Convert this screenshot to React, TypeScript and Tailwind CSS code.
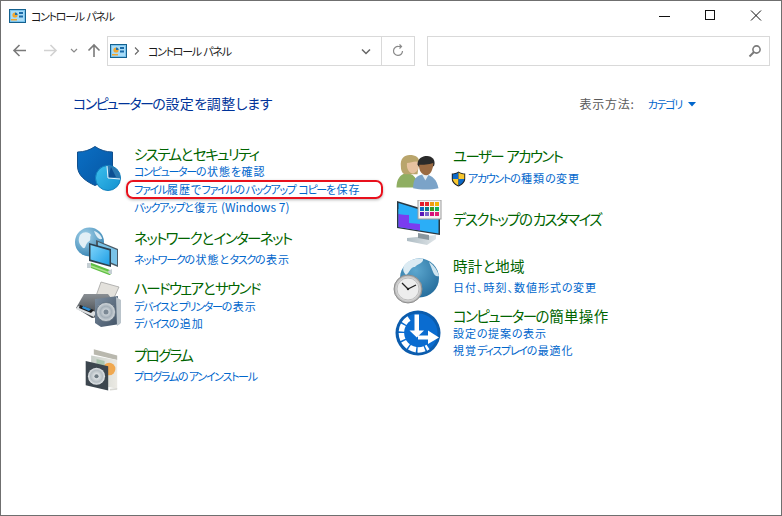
import React from "react";

const FONT = "[font-family:'Noto_Sans_CJK_JP','Noto_Sans',sans-serif] [font-feature-settings:'palt']";

function splitRuns(text: string) {
  return text.match(/[ぁ-ゟ]+|[゠-ヿー]+|[一-龯、]+|[^ぁ-ゟ゠-ヿー一-龯、]+/g) ?? [];
}

/* Text whose katakana is set tighter than its hiragana and kanji, as the narrow UI font of the picture does. */
function T({ children, big = false }: { children: string; big?: boolean }) {
  return (
    <>
      {splitRuns(children).map((run, i) => {
        const hira = /^[ぁ-ゟ]/.test(run);
        const kata = /^[゠-ヿー]/.test(run);
        const kanji = /^[一-龯、]/.test(run);
        const cls = big
          ? kata
            ? "tracking-[-1.6px]"
            : hira
              ? "tracking-[-0.2px]"
              : kanji
                ? "tracking-[0.3px]"
                : "tracking-[0px]"
          : kata
            ? "tracking-[-1.3px]"
            : hira
              ? "tracking-[0.4px]"
              : kanji
                ? "tracking-[1px]"
                : "text-[12px] tracking-[0px]";
        return (
          <span key={i} className={cls}>
            {run}
          </span>
        );
      })}
    </>
  );
}

function CpIcon() {
  return (
    <svg width="17" height="14" viewBox="0 0 17 14" className="shrink-0">
      <rect x="0.5" y="0.5" width="16" height="13" fill="#7cc4ee" stroke="#14618f" />
      <rect x="2" y="2" width="13" height="10" fill="#a9dcf7" />
      <circle cx="6" cy="6" r="2.6" fill="#f0a630" />
      <path d="M6 6V3.4A2.6 2.6 0 0 1 8.6 6Z" fill="#1a70b0" />
      <rect x="10" y="3" width="4" height="2" fill="#1b6aa8" />
      <rect x="10" y="6.5" width="4" height="2" fill="#1b6aa8" />
      <rect x="2" y="10" width="6" height="1.5" fill="#f0a630" />
    </svg>
  );
}

function ShieldIcon() {
  return (
    <svg width="48" height="48" viewBox="0 0 48 48">
      <defs>
        <linearGradient id="sh" x1="0" y1="0" x2="1" y2="1">
          <stop offset="0" stopColor="#0a6fc4" />
          <stop offset="1" stopColor="#0656a3" />
        </linearGradient>
        <linearGradient id="pie" x1="0" y1="0" x2="1" y2="1">
          <stop offset="0" stopColor="#3cc0ee" />
          <stop offset="1" stopColor="#1390cf" />
        </linearGradient>
      </defs>
      <path d="M21 0.5C16 4 10 6 3.5 6V20C3.5 29 11 35 21 39.5C31 35 38.5 29 38.5 20V6C32 6 26 4 21 0.5Z" fill="url(#sh)" stroke="#114f8c" />
      <circle cx="34" cy="32" r="12.5" fill="url(#pie)" stroke="#1180bd" />
      <path d="M34 32L33 19.6A12.5 12.5 0 0 1 46.3 33Z" fill="#2a78b0" />
      <path d="M34 32L37 21L42 31Z" fill="#0c4f92" />
      <path d="M34 32L46 33" stroke="#e8f7ff" strokeWidth="1" />
      <path d="M34 32L33 20" stroke="#e8f7ff" strokeWidth="1" />
    </svg>
  );
}

function NetworkIcon() {
  return (
    <svg width="48" height="48" viewBox="0 0 48 48">
      <defs>
        <radialGradient id="gl" cx="0.35" cy="0.3" r="0.8">
          <stop offset="0" stopColor="#a6d3ea" />
          <stop offset="1" stopColor="#2f7fb0" />
        </radialGradient>
        <linearGradient id="scr" x1="0" y1="0" x2="1" y2="1">
          <stop offset="0" stopColor="#7fd4fb" />
          <stop offset="1" stopColor="#1e9fe6" />
        </linearGradient>
      </defs>
      <circle cx="15.5" cy="15" r="14.5" fill="url(#gl)" />
      <path d="M6 8C10 4 15 5 17 8C15 11 18 13 14 15C11 18 12 22 9 21C6 18 3 14 6 8Z" fill="#e2eff6" />
      <path d="M20 4C24 5 28 9 28 12C24 13 22 9 20 4Z" fill="#dcecf5" />
      <path d="M22 13L44 22V40L22 31Z" fill="#4a5b66" />
      <path d="M24 15L43 23V38L24 30Z" fill="#7ac3e8" />
      <path d="M15 16L37 22V40L15 34Z" fill="#2d4150" />
      <path d="M16.5 18L35.5 23.5V38L16.5 32.5Z" fill="url(#scr)" />
      <path d="M16 38L37 46" stroke="#5fbf45" strokeWidth="5" />
      <path d="M17 39L36 46" stroke="#a8e28a" strokeWidth="1.5" />
      <rect x="13" y="36" width="4" height="5" fill="#c5cfd4" />
      <path d="M34 44L38 42V47L35 47Z" fill="#c5cfd4" />
    </svg>
  );
}

function PrinterIcon() {
  return (
    <svg width="48" height="50" viewBox="0 0 48 48">
      <defs>
        <linearGradient id="pr" x1="0" y1="0" x2="0" y2="1">
          <stop offset="0" stopColor="#8a8f94" />
          <stop offset="1" stopColor="#3d4247" />
        </linearGradient>
        <linearGradient id="spk" x1="0" y1="0" x2="1" y2="1">
          <stop offset="0" stopColor="#7d8ea0" />
          <stop offset="1" stopColor="#3f5063" />
        </linearGradient>
        <radialGradient id="cone">
          <stop offset="0" stopColor="#eef1f3" />
          <stop offset="0.6" stopColor="#a4afb8" />
          <stop offset="1" stopColor="#d8dde1" />
        </radialGradient>
      </defs>
      <path d="M27 2L45 7L39 20L22 16Z" fill="#e3e1dc" stroke="#9a9a98" strokeWidth="0.7" />
      <path d="M10 14H34L40 22V34L18 38L2 28Z" fill="url(#pr)" />
      <path d="M4 26L22 32L20 37L2 29Z" fill="#dcdfe1" />
      <path d="M6 25L20 30L17 33L5 28Z" fill="#1c1c1e" />
      <path d="M9 26L17 29L15 31L8 28Z" fill="#2f8fd6" />
      <path d="M21 19L44 16V20L46 44L27 47L21 43Z" fill="url(#spk)" />
      <path d="M42 17L47 20V43L43 46Z" fill="#b9c3ca" />
      <circle cx="32" cy="32" r="9.5" fill="url(#cone)" stroke="#556473" strokeWidth="0.7" />
      <circle cx="32" cy="32" r="2.5" fill="#7b8894" />
    </svg>
  );
}

function ProgramIcon() {
  return (
    <svg width="36" height="44" viewBox="0 0 40 48">
      <defs>
        <linearGradient id="bx" x1="0" y1="0" x2="1" y2="0">
          <stop offset="0" stopColor="#c8cfc9" />
          <stop offset="1" stopColor="#eceae4" />
        </linearGradient>
        <radialGradient id="cd">
          <stop offset="0" stopColor="#f4f6f7" />
          <stop offset="0.7" stopColor="#b5bdc2" />
          <stop offset="1" stopColor="#e6e9eb" />
        </radialGradient>
      </defs>
      <path d="M12 2L38 9V14L12 8Z" fill="#b9b8ae" />
      <path d="M9 9L38 14V46L9 40Z" fill="url(#bx)" />
      <circle cx="29" cy="24" r="7" fill="#f0a850" />
      <path d="M15 13L24 15V22L15 20Z" fill="#a9c4ad" />
      <path d="M3 15L28 21V48L3 42Z" fill="#3c464e" />
      <circle cx="15" cy="32" r="9.5" fill="url(#cd)" />
      <circle cx="15" cy="32" r="2.3" fill="#6e7a82" />
      <path d="M30 46L38 45V47L30 48Z" fill="#d9d9d4" />
    </svg>
  );
}

function UsersIcon() {
  return (
    <svg width="43" height="35" viewBox="0 0 48 40">
      <path d="M0 37C0 28 4 22 10 21C18 20 24 26 25 37Z" fill="#8fae62" />
      <path d="M5 13C4 4 9 0 15 0C22 0 26 3 26 8L24 22H9C6 20 5 17 5 13Z" fill="#b9a56c" />
      <path d="M12 9C16 9 22 6 25 8C26 13 25 20 19 21C15 21 11 16 12 9Z" fill="#e6c2a0" />
      <path d="M19 38C19 28 22 23 32 22C42 23 46 29 48 38C40 40 27 40 19 38Z" fill="#7ba3c8" />
      <path d="M29 22L33 29L37 22Z" fill="#e6eef5" />
      <path d="M24 11C24 4 29 1 35 1C41 1 45 6 43 12L41 14H26Z" fill="#2a2a2a" />
      <path d="M26 11C30 11 37 11 42 9C42 16 39 23 34 23C29 23 25 17 26 11Z" fill="#9a6a42" />
    </svg>
  );
}

function MonitorIcon() {
  const colors = ["#e21b2d", "#e8262a", "#f09a10", "#f5b400", "#0a6cc6", "#0a7d8c", "#3f9a22", "#10b060", "#5a18b8", "#7a62c8", "#d8107a", "#e01f72"];
  return (
    <svg width="48" height="46" viewBox="0 0 48 46">
      <defs>
        <linearGradient id="st" x1="0" y1="0" x2="1" y2="0">
          <stop offset="0" stopColor="#aebcc4" />
          <stop offset="1" stopColor="#dfe5e8" />
        </linearGradient>
      </defs>
      <path d="M1 1L44 14V35L1 28Z" fill="#2b3942" />
      <path d="M2.5 3L42.5 15.5V33.5L2.5 27Z" fill="#2baef7" />
      <path d="M2.5 14L13 15V23L24 24V30.5L2.5 27Z" fill="#7a3cf0" />
      <path d="M2.5 9L12 10V15L2.5 14Z" fill="#2baef7" />
      <path d="M11 38L40 35V39L31 45L11 41Z" fill="url(#st)" />
      <path d="M22 33L33 35V40L22 38Z" fill="#8a979e" />
      <rect x="22" y="0" width="23" height="19" fill="#f3f3f3" stroke="#9c9c9c" />
      {colors.map((c, i) => (
        <rect key={i} x={24 + (i % 4) * 5} y={2 + Math.floor(i / 4) * 5} width="4" height="4" fill={c} />
      ))}
    </svg>
  );
}

function ClockIcon() {
  return (
    <svg width="48" height="46" viewBox="0 0 48 46">
      <defs>
        <radialGradient id="g2" cx="0.4" cy="0.3" r="0.85">
          <stop offset="0" stopColor="#5ca7cf" />
          <stop offset="1" stopColor="#1d6494" />
        </radialGradient>
        <radialGradient id="cl">
          <stop offset="0" stopColor="#f5f5f5" />
          <stop offset="0.8" stopColor="#dcdcdc" />
          <stop offset="1" stopColor="#a7a7a7" />
        </radialGradient>
      </defs>
      <circle cx="26.5" cy="20" r="19.5" fill="url(#g2)" />
      <path d="M12 6C17 1 24 0 30 1C31 5 24 6 22 9C18 8 17 14 13 17C10 14 9 10 12 6Z" fill="#dcebf3" />
      <path d="M36 4C41 7 45 13 46 18C41 20 40 13 36 4Z" fill="#cfe4ef" />
      <circle cx="15" cy="31" r="14" fill="url(#cl)" stroke="#8f8f8f" />
      <circle cx="15" cy="31" r="11" fill="#ededed" stroke="#bdbdbd" />
      <path d="M15 31L23 27M15 31L9 25" stroke="#222" strokeWidth="1.3" />
      <circle cx="15" cy="31" r="1.2" fill="#222" />
    </svg>
  );
}

function AccessIcon() {
  return (
    <svg width="46" height="46" viewBox="0 0 46 46">
      <circle cx="23" cy="23" r="22.5" fill="#0b5cad" />
      <circle cx="23" cy="23" r="19.5" fill="#0a6cd0" />
      <path d="M14 8.5A17 17 0 0 0 33 37" fill="none" stroke="#fff" strokeWidth="5.5" strokeDasharray="7 1.5" />
      <path d="M19.5 4.5H24V20.5H29L21.8 27.5L14.5 20.5H19.5Z" fill="#fff" />
      <path d="M23 25.5H33V20.5L44 27.5L33 34V29.5H23Z" fill="#fff" />
    </svg>
  );
}

function UacShield() {
  return (
    <svg width="15" height="16" viewBox="0 0 15 16" className="shrink-0">
      <path d="M7.5 0.5C5.5 2 3 2.5 0.8 2.5V8C0.8 11.5 4 14 7.5 15.5C11 14 14.2 11.5 14.2 8V2.5C12 2.5 9.5 2 7.5 0.5Z" fill="#1c1c1c" />
      <path d="M7.5 1.5V8H1.7V3.3C3.5 3.2 6 2.7 7.5 1.5Z" fill="#0c69c8" />
      <path d="M7.5 1.5C9 2.7 11.5 3.2 13.3 3.3V8H7.5Z" fill="#f7c62e" />
      <path d="M1.7 8H7.5V14.5C5 13.3 2 11 1.7 8Z" fill="#f7c62e" />
      <path d="M7.5 8H13.3C13 11 10 13.3 7.5 14.5Z" fill="#0c69c8" />
    </svg>
  );
}

function A({ children, className = "" }: { children: string; className?: string }) {
  return (
    <div className={"h-[17px] leading-[17px] text-[11px] text-[#0066cc] whitespace-nowrap " + className}>
      <T>{children}</T>
    </div>
  );
}
function H({ children }: { children: string }) {
  return (
    <div className="h-[20px] leading-[20px] text-[14.5px] text-[#006400] whitespace-nowrap">
      <T big>{children}</T>
    </div>
  );
}

export default function App() {
  return (
    <div className={"w-[782px] h-[516px] bg-white border border-[#6f6f6f] overflow-hidden flex flex-col text-[#1a1a1a] " + FONT}>
      {/* title bar */}
      <div className="h-[30px] flex items-center shrink-0">
        <div className="ml-[8px] -mt-[1px]"><CpIcon /></div>
        <span className="ml-[5px] text-[11px] text-[#1a1a1a]"><T>コントロール パネル</T></span>
        <div className="ml-auto flex items-center">
          <svg width="46" height="30" viewBox="0 0 46 30"><path d="M17 15.5H28" stroke="#111" /></svg>
          <svg width="46" height="30" viewBox="0 0 46 30"><rect x="17.5" y="9.5" width="9" height="9" fill="none" stroke="#111" /></svg>
          <svg width="46" height="30" viewBox="0 0 46 30" className="mr-[1px]"><path d="M17 9.5L27 19.5M27 9.5L17 19.5" stroke="#111" /></svg>
        </div>
      </div>
      {/* nav */}
      <div className="h-[30px] mt-[5px] flex items-center shrink-0">
        <svg width="106" height="30" viewBox="0 0 106 30" className="shrink-0">
          <path d="M13 14.5H25M18.5 9L13 14.5L18.5 20" fill="none" stroke="#7a7a7a" strokeWidth="1.6" />
          <path d="M43 14.5H55M49.5 9L55 14.5L49.5 20" fill="none" stroke="#d2d2d2" strokeWidth="1.6" />
          <path d="M70 13L73 16L76 13" fill="none" stroke="#8a8a8a" strokeWidth="1.2" />
          <path d="M93 21V9M87.5 14.5L93 9L98.5 14.5" fill="none" stroke="#7a7a7a" strokeWidth="1.6" />
        </svg>
        <div className="w-[308px] h-[30px] border border-[#d9d9d9] flex items-center">
          <div className="ml-[2px]"><CpIcon /></div>
          <svg width="8" height="10" viewBox="0 0 8 10" className="ml-[6px]"><path d="M2 1.5L5.5 5L2 8.5" fill="none" stroke="#666" strokeWidth="1.1" /></svg>
          <span className="ml-[7px] text-[11px] text-[#1a1a1a]"><T>コントロール パネル</T></span>
          <svg width="10" height="7" viewBox="0 0 10 7" className="ml-auto mr-[10px]"><path d="M1 1.5L5 5.5L9 1.5" fill="none" stroke="#666" strokeWidth="1.5" /></svg>
          <div className="w-[33px] h-full border-l border-[#d9d9d9] flex items-center justify-center shrink-0">
            <svg width="14" height="14" viewBox="0 0 14 14"><path d="M11.5 7A4.5 4.5 0 1 1 7.5 2.5H10M8.5 0.5L10.5 2.5L8.5 4.5" fill="none" stroke="#8a8a8a" strokeWidth="1.2" /></svg>
          </div>
        </div>
        <div className="ml-[12px] w-[343px] h-[30px] border border-[#d9d9d9] flex items-center justify-end pr-[7px]">
          <svg width="14" height="14" viewBox="0 0 14 14"><circle cx="8.5" cy="5.5" r="3.6" fill="none" stroke="#7a7a7a" strokeWidth="1.6" /><path d="M6 8L1.5 12.5" stroke="#7a7a7a" strokeWidth="2" /></svg>
        </div>
      </div>
      {/* header */}
      <div className="flex items-center mt-[26px] h-[22px] shrink-0">
        <span className="ml-[72px] text-[14px] text-[#003399] whitespace-nowrap"><T big>コンピューターの設定を調整します</T></span>
        <span className="ml-auto text-[12px] text-[#5a5a5a] mt-[2px] tracking-[0.8px]">表示方法:</span>
        <span className="ml-[13px] text-[11px] text-[#0066cc] mt-[2px]"><T>カテゴリ</T></span>
        <svg width="8" height="5" viewBox="0 0 8 5" className="ml-[6px] mr-[85px] mt-[2px]"><path d="M0 0H8L4 4.5Z" fill="#0066cc" /></svg>
      </div>
      {/* content */}
      <div className="flex mt-[30px]">
        <div className="w-[319px] ml-[73px] flex flex-col shrink-0">
          <div className="flex h-[84px]">
            <div className="w-[60px] shrink-0 mt-[2px]"><ShieldIcon /></div>
            <div className="flex flex-col">
              <H>システムとセキュリティ</H>
              <A className="-mt-[1px]">コンピューターの状態を確認</A>
              <div className="relative">
                <A>ファイル履歴でファイルのバックアップ コピーを保存</A>
                <div className="absolute -left-[8px] top-0 w-[257px] h-[19px] border-2 border-[#e8101c] rounded-[7px] shadow-[0_1px_3px_rgba(0,0,0,0.3)]" />
              </div>
              <A className="mt-[1px]">バックアップと復元 (Windows 7)</A>
            </div>
          </div>
          <div className="flex h-[50px]">
            <div className="w-[60px] shrink-0 -mt-[1px]"><NetworkIcon /></div>
            <div className="flex flex-col">
              <H>ネットワークとインターネット</H>
              <A className="mt-[3px]">ネットワークの状態とタスクの表示</A>
            </div>
          </div>
          <div className="flex h-[67px]">
            <div className="w-[60px] shrink-0 mt-[1px]"><PrinterIcon /></div>
            <div className="flex flex-col">
              <H>ハードウェアとサウンド</H>
              <A>デバイスとプリンターの表示</A>
              <A>デバイスの追加</A>
            </div>
          </div>
          <div className="flex">
            <div className="w-[60px] shrink-0 mt-[2px] pl-[9px]"><ProgramIcon /></div>
            <div className="flex flex-col">
              <H>プログラム</H>
              <A className="mt-[3px]">プログラムのアンインストール</A>
            </div>
          </div>
        </div>
        <div className="flex flex-col">
          <div className="flex h-[46px]">
            <div className="w-[60px] shrink-0 mt-[11px] pl-[3px]"><UsersIcon /></div>
            <div className="flex flex-col pt-[2px]">
              <H>ユーザー アカウント</H>
              <div className="flex items-center mt-[4px] -ml-[2px]">
                <UacShield />
                <A className="ml-[2px]">アカウントの種類の変更</A>
              </div>
            </div>
          </div>
          <div className="flex h-[46px]">
            <div className="w-[60px] shrink-0 mt-[10px] pl-[3px]"><MonitorIcon /></div>
            <div className="flex flex-col pt-[19px]">
              <H>デスクトップのカスタマイズ</H>
            </div>
          </div>
          <div className="flex h-[50px]">
            <div className="w-[60px] shrink-0 mt-[22px]"><ClockIcon /></div>
            <div className="flex flex-col pt-[20px]">
              <H>時計と地域</H>
              <A className="mt-[3px]">日付、時刻、数値形式の変更</A>
            </div>
          </div>
          <div className="flex">
            <div className="w-[60px] shrink-0 mt-[24px] pl-[2px]"><AccessIcon /></div>
            <div className="flex flex-col pt-[20px]">
              <H>コンピューターの簡単操作</H>
              <A className="-mt-[1px]">設定の提案の表示</A>
              <A>視覚ディスプレイの最適化</A>
            </div>
          </div>
        </div>
      </div>
    </div>
  );
}
